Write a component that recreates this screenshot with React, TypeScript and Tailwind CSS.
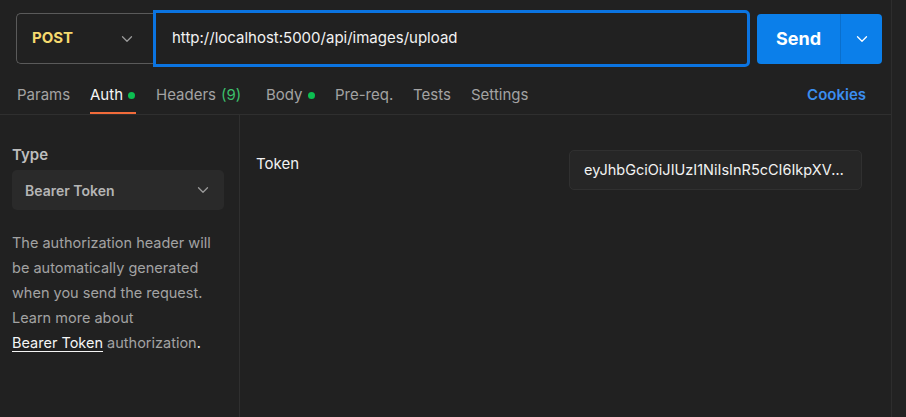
import React from "react";

const Chevron = ({ className = "" }: { className?: string }) => (
  <svg width="12" height="8" viewBox="0 0 12 8" className={className} fill="none">
    <path d="M1.5 1.75 L6 6.25 L10.5 1.75" stroke="currentColor" strokeWidth="1.3" strokeLinecap="round" strokeLinejoin="round" />
  </svg>
);

export default function App() {
  return (
    <div
      className="w-[906px] h-[417px] bg-[#212121] flex overflow-hidden"
      style={{ fontFamily: "Inter, 'Noto Sans', sans-serif" }}
    >
      <div className="w-[892px] h-full border-r border-[#2d2d2d] flex flex-col">
        {/* URL row */}
        <div className="flex items-center pl-4 pt-[10px] h-[67px]">
          <div className="w-[137px] h-[51px] border border-r-0 border-[#5a5a5a] rounded-l-[5px] flex items-center justify-between pl-[15px] pr-[20px]">
            <span className="text-[15px] font-bold text-[#f6d96e]">POST</span>
            <Chevron className="text-[#9a9a9a]" />
          </div>
          <div className="w-[597px] h-[57px] border-[3px] border-[#0b74e1] rounded-r-[5px] flex items-center pl-[16px]">
            <span className="text-[15px] text-[#f2f2f2]">http://localhost:5000/api/images/upload</span>
          </div>
          <div className="ml-[7px] w-[125px] h-[50px] bg-[#0b7fea] rounded-[4px] flex">
            <div className="w-[84px] flex items-center justify-center border-r border-[#0a6fcc]">
              <span className="text-[18px] font-bold text-white">Send</span>
            </div>
            <div className="flex-1 flex items-center justify-center text-white">
              <Chevron />
            </div>
          </div>
        </div>

        {/* Tabs */}
        <div className="h-[48px] border-b border-[#2f2f2f] flex items-stretch pl-[17px] pr-[25px] pt-[10px] text-[15px]">
          <div className="w-[73px] flex items-center text-[#a3a3a3]">Params</div>
          <div className="w-[66px] relative flex items-center">
            <span className="text-[#f5f5f5]">Auth</span>
            <span className="ml-[5px] w-[7px] h-[7px] rounded-full bg-[#0cbf51]" />
            <span className="absolute left-0 bottom-0 w-[46px] h-[2px] bg-[#f26b3a]" />
          </div>
          <div className="w-[110px] flex items-center text-[#a3a3a3]">
            Headers<span className="ml-[5px] text-[#3cbf6b]">(9)</span>
          </div>
          <div className="w-[69px] flex items-center text-[#a3a3a3]">
            Body<span className="ml-[5px] w-[7px] h-[7px] rounded-full bg-[#0cbf51]" />
          </div>
          <div className="w-[78px] flex items-center text-[#a3a3a3]">Pre-req.</div>
          <div className="w-[58px] flex items-center text-[#a3a3a3]">Tests</div>
          <div className="flex items-center text-[#a3a3a3]">Settings</div>
          <div className="ml-auto flex items-center font-semibold text-[#3b8ef0]">Cookies</div>
        </div>

        {/* Body */}
        <div className="flex-1 flex">
          <div className="w-[240px] border-r border-[#2f2f2f] px-3 pt-[31px]">
            <div className="text-[15px] font-semibold text-[#bdbdbd] leading-[18px]">Type</div>
            <div className="mt-[6px] h-[40px] w-[212px] bg-[#2a2a2a] rounded-[5px] flex items-center justify-between pl-[13px] pr-[15px]">
              <span className="text-[14px] font-semibold text-[#b5b5b5]">Bearer Token</span>
              <Chevron className="text-[#9a9a9a]" />
            </div>
            <p className="mt-[20px] text-[14.5px] leading-[25px] text-[#a3a3a3]">
              The authorization header will be automatically generated when you send the request. Learn more about{" "}
              <span className="text-[#f5f5f5] underline underline-offset-[3px] whitespace-nowrap">Bearer Token</span> authorization
              <span className="text-[#f5f5f5]">.</span>
            </p>
          </div>
          <div className="flex-1 flex items-start pl-4 pt-[35px] pr-[29px]">
            <div className="text-[15px] text-[#f2f2f2] leading-[18px] mt-[5px]">Token</div>
            <div className="ml-auto w-[293px] h-[40px] bg-[#262626] border border-[#303030] rounded-[5px] flex items-center pl-[14px] pr-[10px]">
              <span className="text-[14.5px] text-[#f2f2f2] whitespace-nowrap overflow-hidden text-ellipsis">
                eyJhbGciOiJIUzI1NiIsInR5cCI6IkpXVCJ9.eyJpZCI6MX0
              </span>
            </div>
          </div>
        </div>
      </div>
      <div className="flex-1 bg-[#222222]" />
    </div>
  );
}
